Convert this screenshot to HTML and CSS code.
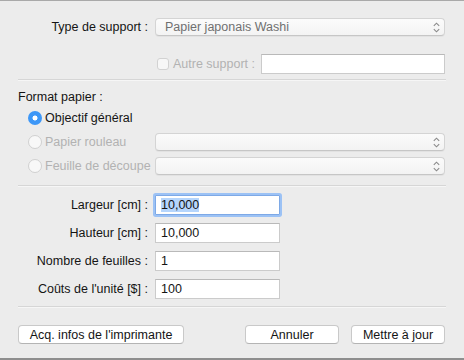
FILE: index.html
```html
<!DOCTYPE html>
<html lang="fr">
<head>
    <meta charset="UTF-8">
    <meta name="viewport" content="width=device-width, initial-scale=1.0">
    <title>Format papier</title>
    <link rel="stylesheet" href="styles.css">
</head>
<body>
    <div class="window">
        <!-- Type de support -->
        <div class="section media">
            <div class="row">
                <span class="lbl">Type de support :</span>
                <div class="select">
                    <span class="value">Papier japonais Washi</span>
                    <svg class="arrows" width="7" height="11" viewBox="0 0 7 11"><path d="M0.8 3.8 L3.5 1.2 L6.2 3.8 M0.8 7.2 L3.5 9.8 L6.2 7.2" fill="none" stroke="#8a8a8a" stroke-width="1.1"/></svg>
                </div>
            </div>
            <div class="row other-row">
                <span></span>
                <div class="other">
                    <label class="check disabled"><span class="box"></span>Autre support :</label>
                    <div class="field wide"></div>
                </div>
            </div>
        </div>
        <div class="sep"></div>

        <!-- Format papier -->
        <div class="section format">
            <div class="title">Format papier :</div>
            <div class="row radio-row">
                <label class="radio on"><span class="dot"></span>Objectif général</label>
            </div>
            <div class="row radio-row">
                <label class="radio disabled"><span class="dot"></span>Papier rouleau</label>
                <div class="select">
                    <span class="value"></span>
                    <svg class="arrows" width="7" height="11" viewBox="0 0 7 11"><path d="M0.8 3.8 L3.5 1.2 L6.2 3.8 M0.8 7.2 L3.5 9.8 L6.2 7.2" fill="none" stroke="#8a8a8a" stroke-width="1.1"/></svg>
                </div>
            </div>
            <div class="row radio-row">
                <label class="radio disabled"><span class="dot"></span>Feuille de découpe</label>
                <div class="select">
                    <span class="value"></span>
                    <svg class="arrows" width="7" height="11" viewBox="0 0 7 11"><path d="M0.8 3.8 L3.5 1.2 L6.2 3.8 M0.8 7.2 L3.5 9.8 L6.2 7.2" fill="none" stroke="#8a8a8a" stroke-width="1.1"/></svg>
                </div>
            </div>
        </div>
        <div class="sep"></div>

        <!-- Dimensions -->
        <div class="section sizes">
            <div class="row">
                <span class="lbl">Largeur [cm] :</span>
                <div class="field focus"><span class="sel">10,000</span></div>
            </div>
            <div class="row">
                <span class="lbl">Hauteur [cm] :</span>
                <div class="field">10,000</div>
            </div>
            <div class="row">
                <span class="lbl">Nombre de feuilles :</span>
                <div class="field">1</div>
            </div>
            <div class="row">
                <span class="lbl">Coûts de l'unité [$] :</span>
                <div class="field">100</div>
            </div>
        </div>
        <div class="sep"></div>

        <div class="buttons">
            <button class="btn acq">Acq. infos de l'imprimante</button>
            <button class="btn">Annuler</button>
            <button class="btn">Mettre à jour</button>
        </div>
    </div>
</body>
</html>
```

FILE: styles.css
```css
body {
    margin: 0;
    font-family: "Liberation Sans", Arial, sans-serif;
    font-size: 12.5px;
    color: #141414;
    background: #ececec;
}
.window {
    box-sizing: border-box;
    width: 464px;
    height: 360px;
    background: #ececec;
    border-top: 1px solid #a9a9a9;
    border-bottom: 2px solid #8e8e8e;
}
.section {
    padding: 0 19px 0 18px;
}
.row {
    display: grid;
    grid-template-columns: 130px 290px;
    column-gap: 7px;
    align-items: center;
}
.lbl {
    text-align: right;
    white-space: nowrap;
}
.sep {
    height: 1px;
    margin: 0 18px;
    background: #d6d6d6;
    border-bottom: 1px solid #f6f6f6;
}

/* select */
.select {
    box-sizing: border-box;
    height: 18px;
    display: flex;
    align-items: center;
    justify-content: space-between;
    padding: 0 4px 0 9px;
    background: linear-gradient(#fbfbfb, #f3f3f3);
    border: 1px solid #d4d4d4;
    border-bottom-color: #c6c6c6;
    border-radius: 4px;
    box-shadow: 0 1px 0 rgba(0, 0, 0, 0.04);
}
.select .value {
    color: #707070;
}

/* top block */
.media {
    padding-top: 17px;
}
.other-row {
    margin-top: 18px;
}
.other {
    display: flex;
    justify-content: space-between;
    align-items: center;
}
.check {
    display: flex;
    align-items: center;
    margin-left: 2px;
    color: #b2b2b2;
}
.check .box {
    box-sizing: border-box;
    flex-shrink: 0;
    width: 12px;
    height: 12px;
    margin-right: 4px;
    border: 1px solid #d2d2d2;
    border-radius: 3px;
    background: #f7f7f7;
}
.field {
    box-sizing: border-box;
    width: 125px;
    height: 20px;
    padding: 2px 0 0 5px;
    background: #fff;
    border: 1px solid #cbcbcb;
    border-top-color: #b9b9b9;
    line-height: 15px;
}
.field.wide {
    width: 184px;
}
.media + .sep {
    margin-top: 5px;
}

/* format papier */
.format {
    padding-top: 8px;
}
.title {
    line-height: 16px;
    margin-bottom: 4px;
}
.radio-row {
    height: 18px;
    margin-bottom: 6px;
}
.radio-row:last-child {
    margin-bottom: 0;
}
.radio {
    display: flex;
    align-items: center;
    margin-left: 10px;
    white-space: nowrap;
}
.radio .dot {
    box-sizing: border-box;
    flex-shrink: 0;
    width: 14px;
    height: 14px;
    margin-right: 3px;
    border-radius: 50%;
    border: 1px solid #d0d0d0;
    background: #f8f8f8;
}
.radio.on .dot {
    border: none;
    background: radial-gradient(circle, #fff 0 2.2px, #3d97f7 2.8px);
}
.radio.disabled {
    color: #b2b2b2;
}
.format + .sep {
    margin-top: 10px;
}

/* dimensions */
.sizes {
    padding-top: 8px;
}
.sizes .row {
    margin-bottom: 8px;
}
.sizes .row:last-child {
    margin-bottom: 0;
}
.field.focus {
    border-color: #7ea9e6;
    box-shadow: 0 0 0 2px #9cc2f5;
    border-radius: 1px;
}
.sel {
    background: #b5d5fc;
}
.sizes + .sep {
    margin-top: 7px;
}

/* buttons */
.buttons {
    display: flex;
    gap: 12px;
    padding: 17px 19px 0 18px;
}
.btn {
    box-sizing: border-box;
    height: 19px;
    width: 94px;
    padding: 0;
    font-family: inherit;
    font-size: 12.5px;
    color: #141414;
    background: #fff;
    border: 1px solid #c9c9c9;
    border-bottom-color: #b4b4b4;
    border-radius: 4px;
}
.btn.acq {
    width: 166px;
    margin-right: auto;
}
```
